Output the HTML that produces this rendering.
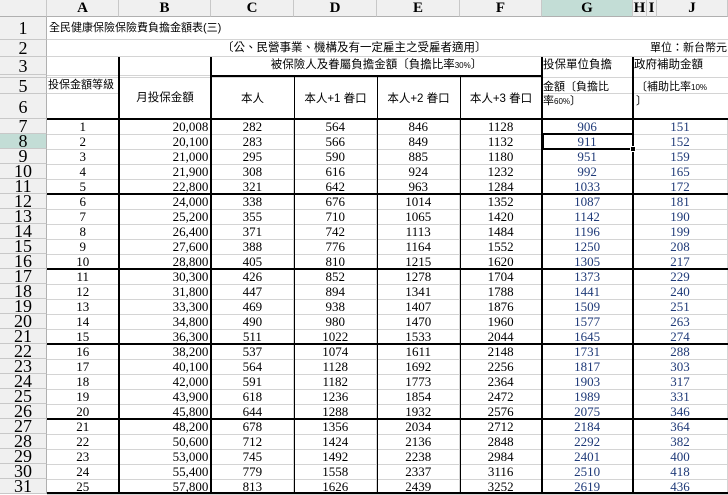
<!DOCTYPE html>
<html><head><meta charset="utf-8"><style>
*{margin:0;padding:0;box-sizing:border-box}
body{width:728px;height:494px;overflow:hidden;background:#fff;position:relative;font-family:"Liberation Serif","Noto Sans CJK TC",serif;font-size:13px;color:#000}
.a{position:absolute;white-space:nowrap}
.ch{position:absolute;top:0;height:17px;background:#f0f0f0;border-right:1px solid #c8c8c8;border-bottom:1px solid #b0b0b0;font-weight:bold;font-size:15px;text-align:center;line-height:17px}
.rh{position:absolute;left:0;width:47px;background:#f0f0f0;border-right:1px solid #b0b0b0;border-bottom:1px solid #c8c8c8;font-size:18px;text-align:center;overflow:hidden}
.cj{font-family:"Liberation Sans","Noto Sans CJK TC",sans-serif;font-size:11px}
table{position:absolute;left:47px;top:119px;border-collapse:collapse;table-layout:fixed}
td{height:15px;border-bottom:1px solid #d4d4d4;border-right:1px solid #d4d4d4;text-align:center;line-height:13px;font-size:13px;padding:0;overflow:hidden;white-space:nowrap}
td.r{text-align:right;padding-right:2px}
td.b{color:#1f3a78}
.hl{position:absolute;background:#000}
.g{position:absolute;background:#d4d4d4}
</style></head><body>
<div class="ch" style="left:0;width:47px"></div>
<div class="ch" style="left:47px;width:72px">A</div>
<div class="ch" style="left:119px;width:92px">B</div>
<div class="ch" style="left:211px;width:83px">C</div>
<div class="ch" style="left:294px;width:83px">D</div>
<div class="ch" style="left:377px;width:83px">E</div>
<div class="ch" style="left:460px;width:82px">F</div>
<div class="ch" style="left:542px;width:91px;background:#c3ddd6">G</div>
<div class="ch" style="left:633px;width:14px">H</div>
<div class="ch" style="left:647px;width:10px">I</div>
<div class="ch" style="left:657px;width:71px">J</div>
<div class="rh" style="top:17px;height:23px;line-height:23px">1</div>
<div class="rh" style="top:40px;height:17px;line-height:17px">2</div>
<div class="rh" style="top:57px;height:18px;line-height:18px">3</div>
<div class="rh" style="top:75px;height:3px"></div>
<div class="rh" style="top:78px;height:16px;line-height:16px">5</div>
<div class="rh" style="top:94px;height:25px;line-height:27px">6</div>
<div class="rh" style="top:119px;height:15px;line-height:15px">7</div>
<div class="rh" style="top:134px;height:15px;line-height:15px;background:#c3ddd6">8</div>
<div class="rh" style="top:149px;height:15px;line-height:15px">9</div>
<div class="rh" style="top:164px;height:15px;line-height:15px">10</div>
<div class="rh" style="top:179px;height:15px;line-height:15px">11</div>
<div class="rh" style="top:194px;height:15px;line-height:15px">12</div>
<div class="rh" style="top:209px;height:15px;line-height:15px">13</div>
<div class="rh" style="top:224px;height:15px;line-height:15px">14</div>
<div class="rh" style="top:239px;height:15px;line-height:15px">15</div>
<div class="rh" style="top:254px;height:15px;line-height:15px">16</div>
<div class="rh" style="top:269px;height:15px;line-height:15px">17</div>
<div class="rh" style="top:284px;height:15px;line-height:15px">18</div>
<div class="rh" style="top:299px;height:15px;line-height:15px">19</div>
<div class="rh" style="top:314px;height:15px;line-height:15px">20</div>
<div class="rh" style="top:329px;height:15px;line-height:15px">21</div>
<div class="rh" style="top:344px;height:15px;line-height:15px">22</div>
<div class="rh" style="top:359px;height:15px;line-height:15px">23</div>
<div class="rh" style="top:374px;height:15px;line-height:15px">24</div>
<div class="rh" style="top:389px;height:15px;line-height:15px">25</div>
<div class="rh" style="top:404px;height:15px;line-height:15px">26</div>
<div class="rh" style="top:419px;height:15px;line-height:15px">27</div>
<div class="rh" style="top:434px;height:15px;line-height:15px">28</div>
<div class="rh" style="top:449px;height:15px;line-height:15px">29</div>
<div class="rh" style="top:464px;height:15px;line-height:15px">30</div>
<div class="rh" style="top:479px;height:15px;line-height:15px">31</div>
<div class="g" style="left:47px;top:39px;width:681px;height:1px"></div>
<div class="g" style="left:47px;top:56px;width:681px;height:1px"></div>
<div class="g" style="left:47px;top:75px;width:164px;height:1px"></div>
<div class="g" style="left:47px;top:77px;width:681px;height:1px"></div>
<div class="g" style="left:47px;top:93px;width:72px;height:1px"></div>
<div class="g" style="left:542px;top:93px;width:186px;height:1px"></div>
<div class="a cj" style="left:49px;top:19px;font-size:11px;line-height:18px">全民健康保險保險費負擔金額表(三)</div>
<div class="a cj" style="left:222px;top:40px;line-height:17px;font-size:11.5px">〔公、民營事業、機構及有一定雇主之受雇者適用〕</div>
<div class="a cj" style="left:650px;top:40px;line-height:17px;font-size:11px">單位：新台幣元</div>
<div class="a cj" style="left:211px;top:57px;width:331px;text-align:center;line-height:17px;font-size:11.5px">被保險人及眷屬負擔金額〔負擔比率<span style="font-size:8px">30%</span>〕</div>
<div class="a cj" style="left:543px;top:57px;line-height:17px;font-size:11.5px">投保單位負擔</div>
<div class="a cj" style="left:634px;top:57px;line-height:17px;font-size:11.5px">政府補助金額</div>
<div class="a cj" style="left:48px;top:79px;line-height:13px;font-size:11px">投保金額等級</div>
<div class="a cj" style="left:119px;top:78px;width:92px;height:41px;line-height:41px;text-align:center;font-size:11.5px">月投保金額</div>
<div class="a cj" style="left:211px;top:78px;width:83px;height:41px;line-height:43px;text-align:center;font-size:11.5px">本人</div>
<div class="a cj" style="left:294px;top:78px;width:83px;height:41px;line-height:43px;text-align:center;font-size:11.5px">本人+1 眷口</div>
<div class="a cj" style="left:377px;top:78px;width:83px;height:41px;line-height:43px;text-align:center;font-size:11.5px">本人+2 眷口</div>
<div class="a cj" style="left:460px;top:78px;width:82px;height:41px;line-height:43px;text-align:center;font-size:11.5px">本人+3 眷口</div>
<div class="a cj" style="left:543px;top:78px;height:15px;overflow:hidden;line-height:18px">金額〔負擔比</div>
<div class="a cj" style="left:543px;top:94px;line-height:15px">率<span style="font-size:8px">60%</span>〕</div>
<div class="a cj" style="left:636px;top:78px;height:15px;overflow:hidden;line-height:18px">〔補助比率<span style="font-size:8px">10%</span></div>
<div class="a cj" style="left:636px;top:94px;line-height:15px">〕</div>
<table>
<colgroup><col style="width:72px"><col style="width:92px"><col style="width:83px"><col style="width:83px"><col style="width:83px"><col style="width:82px"><col style="width:91px"><col style="width:95px"></colgroup>
<tr><td>1</td><td class="r">20,008</td><td>282</td><td>564</td><td>846</td><td>1128</td><td class="b">906</td><td class="b">151</td></tr>
<tr><td>2</td><td class="r">20,100</td><td>283</td><td>566</td><td>849</td><td>1132</td><td class="b">911</td><td class="b">152</td></tr>
<tr><td>3</td><td class="r">21,000</td><td>295</td><td>590</td><td>885</td><td>1180</td><td class="b">951</td><td class="b">159</td></tr>
<tr><td>4</td><td class="r">21,900</td><td>308</td><td>616</td><td>924</td><td>1232</td><td class="b">992</td><td class="b">165</td></tr>
<tr><td>5</td><td class="r">22,800</td><td>321</td><td>642</td><td>963</td><td>1284</td><td class="b">1033</td><td class="b">172</td></tr>
<tr><td>6</td><td class="r">24,000</td><td>338</td><td>676</td><td>1014</td><td>1352</td><td class="b">1087</td><td class="b">181</td></tr>
<tr><td>7</td><td class="r">25,200</td><td>355</td><td>710</td><td>1065</td><td>1420</td><td class="b">1142</td><td class="b">190</td></tr>
<tr><td>8</td><td class="r">26,400</td><td>371</td><td>742</td><td>1113</td><td>1484</td><td class="b">1196</td><td class="b">199</td></tr>
<tr><td>9</td><td class="r">27,600</td><td>388</td><td>776</td><td>1164</td><td>1552</td><td class="b">1250</td><td class="b">208</td></tr>
<tr><td>10</td><td class="r">28,800</td><td>405</td><td>810</td><td>1215</td><td>1620</td><td class="b">1305</td><td class="b">217</td></tr>
<tr><td>11</td><td class="r">30,300</td><td>426</td><td>852</td><td>1278</td><td>1704</td><td class="b">1373</td><td class="b">229</td></tr>
<tr><td>12</td><td class="r">31,800</td><td>447</td><td>894</td><td>1341</td><td>1788</td><td class="b">1441</td><td class="b">240</td></tr>
<tr><td>13</td><td class="r">33,300</td><td>469</td><td>938</td><td>1407</td><td>1876</td><td class="b">1509</td><td class="b">251</td></tr>
<tr><td>14</td><td class="r">34,800</td><td>490</td><td>980</td><td>1470</td><td>1960</td><td class="b">1577</td><td class="b">263</td></tr>
<tr><td>15</td><td class="r">36,300</td><td>511</td><td>1022</td><td>1533</td><td>2044</td><td class="b">1645</td><td class="b">274</td></tr>
<tr><td>16</td><td class="r">38,200</td><td>537</td><td>1074</td><td>1611</td><td>2148</td><td class="b">1731</td><td class="b">288</td></tr>
<tr><td>17</td><td class="r">40,100</td><td>564</td><td>1128</td><td>1692</td><td>2256</td><td class="b">1817</td><td class="b">303</td></tr>
<tr><td>18</td><td class="r">42,000</td><td>591</td><td>1182</td><td>1773</td><td>2364</td><td class="b">1903</td><td class="b">317</td></tr>
<tr><td>19</td><td class="r">43,900</td><td>618</td><td>1236</td><td>1854</td><td>2472</td><td class="b">1989</td><td class="b">331</td></tr>
<tr><td>20</td><td class="r">45,800</td><td>644</td><td>1288</td><td>1932</td><td>2576</td><td class="b">2075</td><td class="b">346</td></tr>
<tr><td>21</td><td class="r">48,200</td><td>678</td><td>1356</td><td>2034</td><td>2712</td><td class="b">2184</td><td class="b">364</td></tr>
<tr><td>22</td><td class="r">50,600</td><td>712</td><td>1424</td><td>2136</td><td>2848</td><td class="b">2292</td><td class="b">382</td></tr>
<tr><td>23</td><td class="r">53,000</td><td>745</td><td>1492</td><td>2238</td><td>2984</td><td class="b">2401</td><td class="b">400</td></tr>
<tr><td>24</td><td class="r">55,400</td><td>779</td><td>1558</td><td>2337</td><td>3116</td><td class="b">2510</td><td class="b">418</td></tr>
<tr><td>25</td><td class="r">57,800</td><td>813</td><td>1626</td><td>2439</td><td>3252</td><td class="b">2619</td><td class="b">436</td></tr>
</table>
<div class="hl" style="left:47px;top:118px;width:681px;height:2px"></div>
<div class="hl" style="left:47px;top:193px;width:681px;height:2px"></div>
<div class="hl" style="left:47px;top:268px;width:681px;height:2px"></div>
<div class="hl" style="left:47px;top:343px;width:681px;height:2px"></div>
<div class="hl" style="left:47px;top:418px;width:681px;height:2px"></div>
<div class="hl" style="left:47px;top:492px;width:681px;height:2px"></div>
<div class="hl" style="left:211px;top:75px;width:331px;height:2px"></div>
<div class="hl" style="left:118px;top:57px;width:2px;height:437px"></div>
<div class="hl" style="left:210px;top:57px;width:2px;height:437px"></div>
<div class="hl" style="left:541px;top:57px;width:2px;height:437px"></div>
<div class="hl" style="left:632px;top:57px;width:2px;height:437px"></div>
<div class="hl" style="left:294px;top:76px;width:1px;height:418px"></div>
<div class="hl" style="left:377px;top:76px;width:1px;height:418px"></div>
<div class="hl" style="left:460px;top:76px;width:1px;height:418px"></div>
<div class="a" style="left:542px;top:133px;width:92px;height:17px;border:2px solid #000"></div>
<div class="a" style="left:630px;top:146px;width:6px;height:6px;background:#000;border:1px solid #fff"></div>
</body></html>
